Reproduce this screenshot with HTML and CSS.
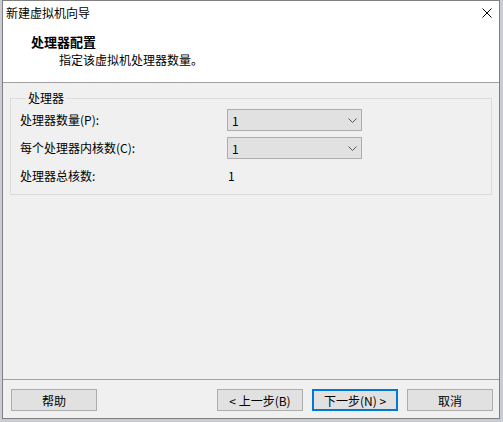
FILE: index.html
```html
<!DOCTYPE html>
<html lang="zh-CN">
<head>
<meta charset="utf-8">
<title>新建虚拟机向导</title>
<link rel="stylesheet" href="styles.css">
</head>
<body>
<div class="window">
  <div class="titlebar">
    <span class="title">新建虚拟机向导</span>
    <svg class="close" width="10" height="10" viewBox="0 0 10 10"><path d="M0.5 0.5 L9.5 9.5 M9.5 0.5 L0.5 9.5" stroke="#000" stroke-width="1" fill="none"/></svg>
  </div>
  <div class="header">
    <div class="h-title">处理器配置</div>
    <div class="h-sub">指定该虚拟机处理器数量。</div>
  </div>
  <div class="content">
    <fieldset class="group">
      <legend>处理器</legend>
      <div class="rows">
        <div class="label">处理器数量(P):</div>
        <div class="combo"><span>1</span><svg width="9" height="5" viewBox="0 0 9 5"><path d="M0.5 0.5 L4.5 4.5 L8.5 0.5" stroke="#555" stroke-width="1" fill="none"/></svg></div>
        <div class="label">每个处理器内核数(C):</div>
        <div class="combo"><span>1</span><svg width="9" height="5" viewBox="0 0 9 5"><path d="M0.5 0.5 L4.5 4.5 L8.5 0.5" stroke="#555" stroke-width="1" fill="none"/></svg></div>
        <div class="label">处理器总核数:</div>
        <div class="value">1</div>
      </div>
    </fieldset>
  </div>
  <div class="footer">
    <button class="btn">帮助</button>
    <div class="spacer"></div>
    <button class="btn">&lt; 上一步(B)</button>
    <button class="btn default">下一步(N) &gt;</button>
    <button class="btn">取消</button>
  </div>
</div>
</body>
</html>
```
FILE: styles.css
```css
html, body {
  margin: 0;
  padding: 0;
}
body {
  width: 503px;
  height: 422px;
  background: #c9ccd4;
  font-family: "Noto Sans CJK SC", "Noto Sans", sans-serif;
  font-size: 12px;
  color: #000;
  overflow: hidden;
}
.window {
  margin-left: 2px;
  width: 498px;
  height: 419px;
  box-sizing: border-box;
  border: 1px solid #808080;
  background: #f0f0f0;
  display: flex;
  flex-direction: column;
}
.titlebar {
  height: 24px;
  background: #fff;
  display: flex;
  align-items: center;
  justify-content: space-between;
  padding: 0 7px 0 3px;
}
.title {
  line-height: 24px;
}
.close {
  display: block;
}
.header {
  background: #fff;
  padding: 8px 0 13px 0;
  border-bottom: 1px solid #a0a0a0;
}
.h-title {
  font-weight: bold;
  font-size: 13px;
  line-height: 18px;
  padding-left: 28px;
}
.h-sub {
  line-height: 18px;
  padding-left: 56px;
}
.content {
  flex: 1;
  padding: 7px 7px 0 7px;
}
.group {
  margin: 0;
  padding: 3px 0 7px 9px;
  border: 1px solid #dcdcdc;
  min-width: 0;
}
.group legend {
  margin-left: 6px;
  padding: 0 2px;
  line-height: 16px;
}
.rows {
  display: grid;
  grid-template-columns: 207px 135px;
  grid-auto-rows: 22px;
  row-gap: 6px;
  align-items: center;
}
.label {
  line-height: 22px;
}
.combo {
  height: 22px;
  box-sizing: border-box;
  border: 1px solid #adadad;
  background: #e1e1e1;
  display: flex;
  align-items: center;
  justify-content: space-between;
  padding: 0 4px 0 4px;
}
.combo svg {
  display: block;
}
.value {
  padding-left: 1px;
  line-height: 22px;
}
.footer {
  border-top: 1px solid #a0a0a0;
  padding: 9px 6px 7px 8px;
  display: flex;
  gap: 9px;
}
.spacer {
  flex: 1;
}
.btn {
  width: 86px;
  height: 22px;
  box-sizing: border-box;
  border: 1px solid #adadad;
  background: #e1e1e1;
  font-family: inherit;
  font-size: 12px;
  color: #000;
  padding: 0;
  margin: 0;
}
.btn.default {
  border: 2px solid #0078d7;
}
```
